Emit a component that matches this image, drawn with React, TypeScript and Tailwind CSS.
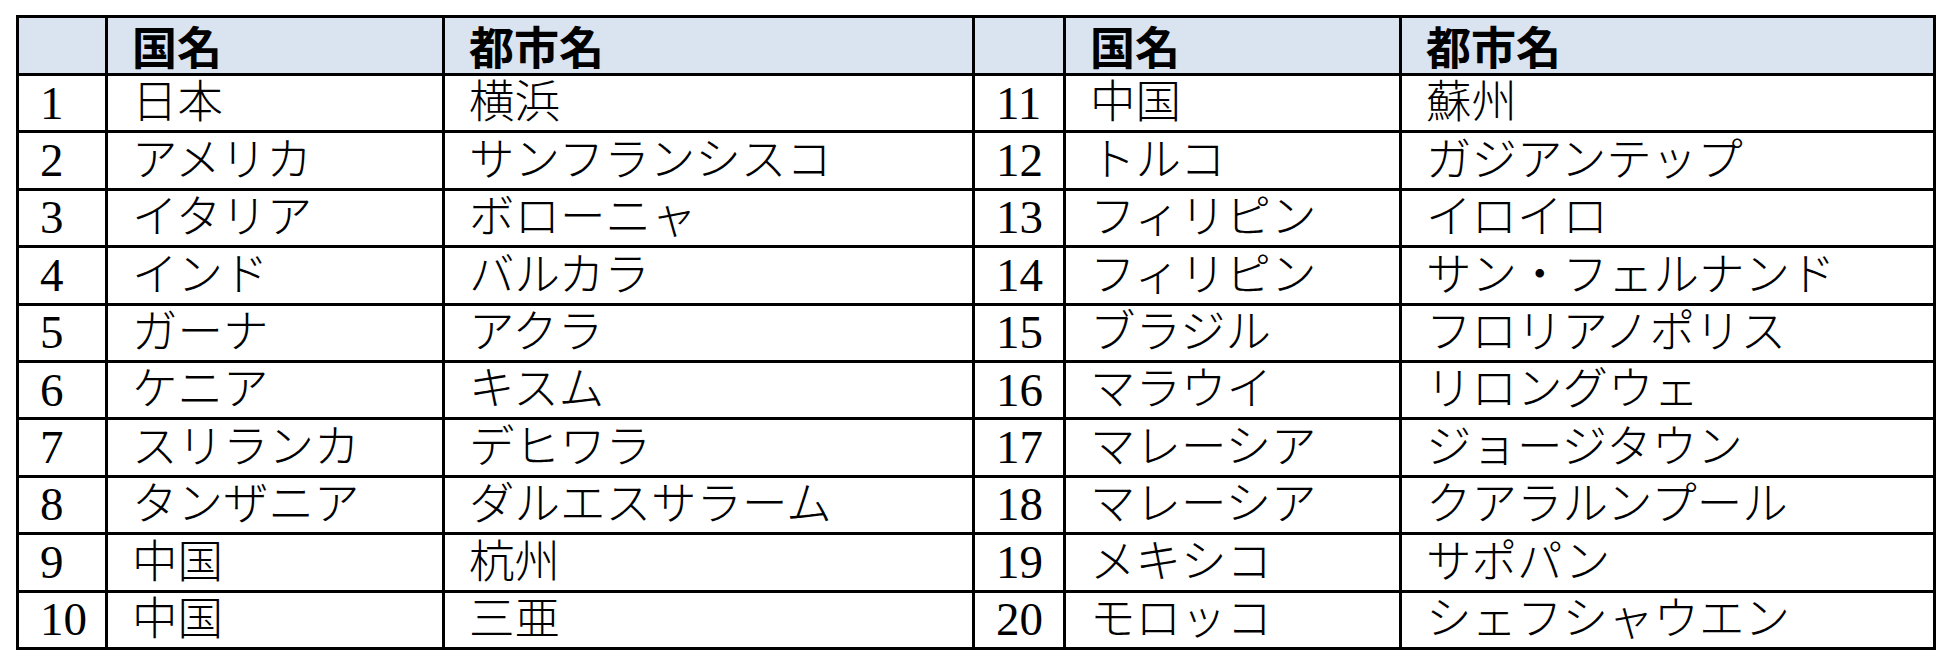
import React from "react";

const rows: [string, string][] = [
  ["日本", "横浜"],
  ["アメリカ", "サンフランシスコ"],
  ["イタリア", "ボローニャ"],
  ["インド", "バルカラ"],
  ["ガーナ", "アクラ"],
  ["ケニア", "キスム"],
  ["スリランカ", "デヒワラ"],
  ["タンザニア", "ダルエスサラーム"],
  ["中国", "杭州"],
  ["中国", "三亜"],
  ["中国", "蘇州"],
  ["トルコ", "ガジアンテップ"],
  ["フィリピン", "イロイロ"],
  ["フィリピン", "サン・フェルナンド"],
  ["ブラジル", "フロリアノポリス"],
  ["マラウイ", "リロングウェ"],
  ["マレーシア", "ジョージタウン"],
  ["マレーシア", "クアラルンプール"],
  ["メキシコ", "サポパン"],
  ["モロッコ", "シェフシャウエン"],
];

const th = "border-[3px] border-black bg-[#dae3f0] text-left pl-6 text-[45px] font-bold font-['Noto_Sans_CJK_JP',sans-serif]";
const td = "border-[3px] border-black text-left pl-6";
const num = "border-[3px] border-black text-left pl-[21px] text-[47px]";

export default function App() {
  const left = rows.slice(0, 10);
  const right = rows.slice(10);
  return (
    <div className="w-[1950px] h-[664px] bg-white pt-[15px] pl-[16px]">
      <table className="border-collapse table-fixed w-[1917px] text-[45.5px] leading-none text-black font-['Liberation_Serif','Noto_Sans_CJK_JP',serif] font-light">
        <colgroup>
          <col className="w-[89px]" />
          <col className="w-[337px]" />
          <col className="w-[530px]" />
          <col className="w-[91px]" />
          <col className="w-[336px]" />
          <col className="w-[534px]" />
        </colgroup>
        <thead>
          <tr className="h-[58px]">
            <th className={th}></th>
            <th className={th}>国名</th>
            <th className={th}>都市名</th>
            <th className={th}></th>
            <th className={th}>国名</th>
            <th className={th}>都市名</th>
          </tr>
        </thead>
        <tbody>
          {left.map((r, i) => (
            <tr key={i} className="h-[57.4px]">
              <td className={num}>{i + 1}</td>
              <td className={td}>{r[0]}</td>
              <td className={td}>{r[1]}</td>
              <td className={num}>{i + 11}</td>
              <td className={td}>{right[i][0]}</td>
              <td className={td}>{right[i][1]}</td>
            </tr>
          ))}
        </tbody>
      </table>
    </div>
  );
}
